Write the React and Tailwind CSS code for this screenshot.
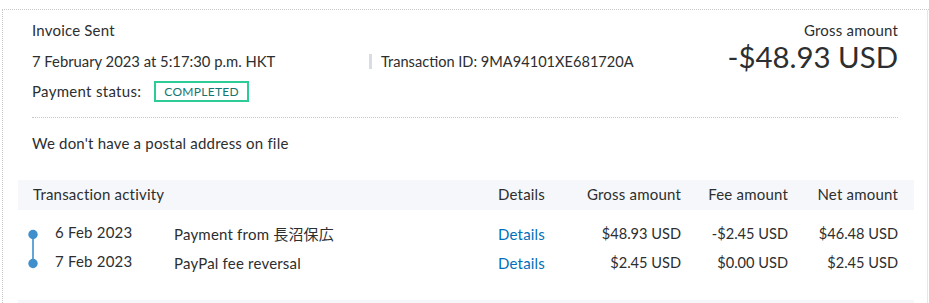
import React from "react";

const font = { fontFamily: "Lato, 'Noto Sans CJK JP', sans-serif" };

function Dot({ first }) {
  return (
    <svg width="27" height="29" viewBox="0 0 27 29" className="shrink-0">
      {first ? (
        <line x1="5" y1="14.5" x2="5" y2="29" stroke="#3f8fcc" strokeWidth="1.6" />
      ) : (
        <line x1="5" y1="0" x2="5" y2="14.5" stroke="#3f8fcc" strokeWidth="1.6" />
      )}
      <circle cx="5" cy="14.5" r="4.7" fill="#3f8fcc" />
    </svg>
  );
}

const rows = [
  { date: "6 Feb 2023", desc: "Payment from 長沼保広", gross: "$48.93 USD", fee: "-$2.45 USD", net: "$46.48 USD" },
  { date: "7 Feb 2023", desc: "PayPal fee reversal", gross: "$2.45 USD", fee: "$0.00 USD", net: "$2.45 USD" },
];

export default function App() {
  return (
    <div className="w-[929px] h-[303px] bg-white overflow-hidden text-[#2c2e2f] tracking-[0.2px]" style={font}>
      <div className="mt-[9px] ml-[2px] h-[294px] border-t border-l border-dotted border-[#c8c8c8] border-r-0 relative">
        <div className="absolute right-[1px] top-0 bottom-0 w-px bg-[#e6e6e6]" />
        <div className="pl-[29px] pr-[31px]">
          <div className="flex justify-between pt-[10px]">
            <div className="text-[15px]">
              <div className="h-[21px] leading-[21px]">Invoice Sent</div>
              <div className="flex items-center h-[21px] leading-[21px] mt-[10px]">
                <span className="w-[337px] text-[14.8px] tracking-normal">7 February 2023 at 5:17:30 p.m. HKT</span>
                <span className="w-[3px] h-[15px] bg-[#d8dde3] mr-[9px]" />
                <span className="text-[14.6px] tracking-normal">Transaction ID: 9MA94101XE681720A</span>
              </div>
              <div className="flex items-center mt-[8px]">
                <span className="mr-[13px] tracking-[0.3px]">Payment status:</span>
                <span className="border-2 border-[#2dcc96] text-[#14746f] text-[12px] tracking-[0.3px] h-[21px] leading-[17px] px-[8px]">COMPLETED</span>
              </div>
            </div>
            <div className="text-right">
              <div className="text-[15px] h-[21px] leading-[21px]">Gross amount</div>
              <div className="text-[29.4px] leading-[34px] mt-[-1px] tracking-normal">-$48.93 USD</div>
            </div>
          </div>
          <div className="mt-[14px] border-t border-dotted border-[#c8c8c8]" />
          <div className="text-[15px] mt-[15px] h-[21px] leading-[21px]">We don't have a postal address on file</div>
        </div>
        <div className="mx-[15px] mt-[26px] text-[15px]">
          <div className="flex items-center h-[30px] bg-[#f5f7fa] pl-[15px] pr-[16px]">
            <span className="flex-1">Transaction activity</span>
            <span className="w-[64px]">Details</span>
            <span className="w-[119px] text-right">Gross amount</span>
            <span className="w-[107px] text-right">Fee amount</span>
            <span className="w-[110px] text-right">Net amount</span>
          </div>
          <div className="pt-[10px] pl-[10px] pr-[16px]">
            {rows.map((r, i) => (
              <div key={i} className="flex items-center h-[29px]">
                <Dot first={i === 0} />
                <span className="w-[119px] mt-[-3px]">{r.date}</span>
                <span className="flex-1">{r.desc}</span>
                <span className="w-[64px] text-[#0070ba]">Details</span>
                <span className="w-[119px] text-right text-[14.6px] tracking-normal">{r.gross}</span>
                <span className="w-[107px] text-right text-[14.6px] tracking-normal">{r.fee}</span>
                <span className="w-[110px] text-right text-[14.6px] tracking-normal">{r.net}</span>
              </div>
            ))}
          </div>
          <div className="mt-[22px] h-[10px] bg-[#f5f7fa]" />
        </div>
      </div>
    </div>
  );
}
